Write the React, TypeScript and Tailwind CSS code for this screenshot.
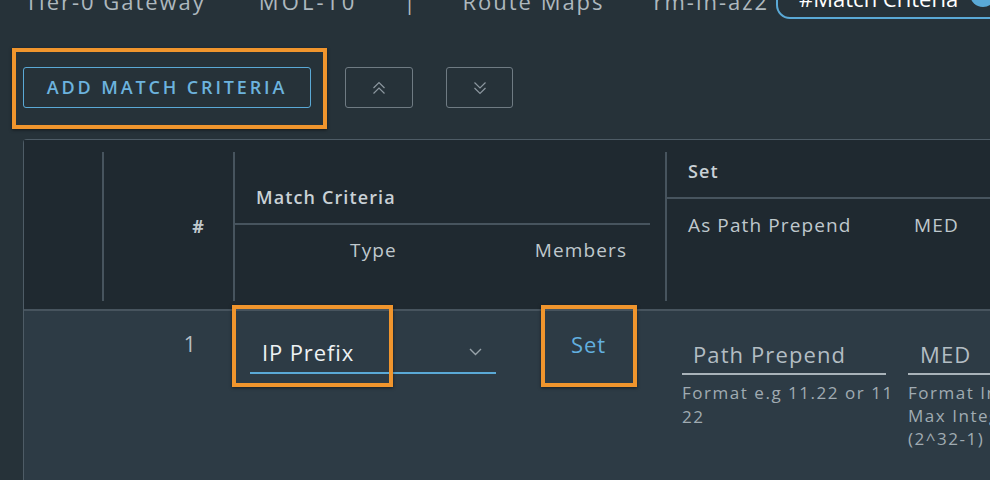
import React from "react";

function DoubleChevron({ dir }: { dir: "up" | "down" }) {
  return (
    <svg width="14" height="16" viewBox="0 0 14 16" fill="none" stroke="#8c979f" strokeWidth="1.2">
      {dir === "up" ? (
        <>
          <path d="M1.5 8 L7 2.5 L12.5 8" />
          <path d="M1.5 13.5 L7 8 L12.5 13.5" />
        </>
      ) : (
        <>
          <path d="M1.5 2.5 L7 8 L12.5 2.5" />
          <path d="M1.5 8 L7 13.5 L12.5 8" />
        </>
      )}
    </svg>
  );
}

function Highlight({ className }: { className: string }) {
  return <div className={"pointer-events-none absolute border-[4px] border-[#f0952d] shadow-[0_1px_3px_rgba(0,0,0,0.5)] " + className} />;
}

export default function App() {
  return (
    <div className="relative h-[480px] w-[990px] overflow-hidden bg-[#263239] font-['Open_Sans',sans-serif] tracking-[0.07em]">
      {/* breadcrumb / tabs, cut off at the top */}
      <nav className="-mt-[21px] flex h-[40px] items-center whitespace-nowrap text-[22px] tracking-[0.09em] text-[#aeb8be]">
        <span className="ml-[25px] shrink-0 translate-y-[2px]">Tier-0 Gateway</span>
        <span className="ml-[53px] shrink-0 translate-y-[2px] tracking-[0.14em]">MOL-T0</span>
        <span className="ml-[46px] shrink-0 translate-y-[2px]">|</span>
        <span className="ml-[45px] shrink-0 translate-y-[2px]">Route Maps</span>
        <span className="ml-[49px] shrink-0 translate-y-[2px]">rm-in-az2</span>
        <div className="ml-[7px] flex h-[40px] shrink-0 items-center rounded-[14px] border-2 border-[#5aa9d6] pl-[21px] pr-[40px]">
          <span className="-translate-y-[1px] tracking-normal text-white">#Match Criteria</span>
          <span className="ml-[12px] flex h-[26px] w-[26px] -translate-y-[5px] items-center justify-center rounded-full bg-[#5aa9d6] text-[16px] font-bold text-[#1f2a31]">i</span>
        </div>
      </nav>

      {/* toolbar */}
      <div className="ml-[23px] mt-[48px] flex items-center">
        <div className="relative shrink-0">
          <button className="flex h-[41px] w-[288px] items-center justify-center rounded-[3px] border border-[#5aa9d6] text-[18px] font-semibold tracking-[0.16em] text-[#6cb3de]">
            ADD MATCH CRITERIA
          </button>
          <Highlight className="-bottom-[21px] -left-[11px] -right-[16px] -top-[19px]" />
        </div>
        <button className="ml-[34px] flex h-[41px] w-[68px] shrink-0 items-center justify-center rounded-[3px] border border-[#6f7b83]">
          <DoubleChevron dir="up" />
        </button>
        <button className="ml-[33px] flex h-[41px] w-[67px] shrink-0 items-center justify-center rounded-[3px] border border-[#6f7b83]">
          <DoubleChevron dir="down" />
        </button>
      </div>

      {/* table */}
      <div className="ml-[23px] mt-[31px] h-[400px] rounded-tl-[4px] border-l border-t border-[#4e5c66]">
        <div className="flex h-[169px] bg-[#1f2930] pb-[8px] pt-[12px] text-[#bfc8cd]">
          <div className="w-[78px] shrink-0" />
          <div className="flex w-[131px] shrink-0 items-center justify-end border-l-2 border-[#47545e] pr-[28px] text-[18px] font-bold">#</div>
          <div className="flex w-[432px] shrink-0 flex-col border-l-2 border-[#47545e]">
            <div className="mr-[15px] h-[73px] border-b-2 border-[#47545e] pl-[21px] pt-[35px] text-[18px] font-semibold leading-[20px] text-[#c9d1d6]">
              Match Criteria
            </div>
            <div className="flex pt-[15px] text-[19px] leading-[20px]">
              <div className="w-[277px] shrink-0 text-center">Type</div>
              <div className="w-[138px] shrink-0 text-center">Members</div>
            </div>
          </div>
          <div className="flex min-w-0 flex-1 flex-col border-l-2 border-[#47545e]">
            <div className="h-[47px] border-b-2 border-[#47545e] pl-[21px] pt-[9px] text-[18px] font-semibold leading-[20px] text-[#c9d1d6]">
              Set
            </div>
            <div className="flex whitespace-nowrap pt-[16px] text-[19px] leading-[20px]">
              <div className="w-[224px] shrink-0 pl-[21px]">As Path Prepend</div>
              <div className="shrink-0 pl-[23px]">MED</div>
            </div>
          </div>
        </div>

        <div className="relative flex h-[240px] border-t-2 border-[#47545e] bg-[#2d3b45]">
          <div className="w-[78px] shrink-0" />
          <div className="w-[131px] shrink-0 pr-[36px] pt-[19px] text-right text-[21px] leading-[28px] text-[#b5bec4]">1</div>
          <div className="flex w-[432px] shrink-0 items-start">
            <div className="ml-[17px] mt-[25px] flex h-[38px] w-[246px] shrink-0 items-center justify-between border-b-2 border-[#5aa9d6] pb-[4px] pl-[12px] pr-[14px]">
              <span className="text-[22px] tracking-[0.04em] text-[#eef2f4]">IP Prefix</span>
              <svg width="13" height="8" viewBox="0 0 13 8" fill="none" stroke="#98a3aa" strokeWidth="1.4">
                <path d="M1 1 L6.5 6.5 L12 1" />
              </svg>
            </div>
            <span className="ml-[75px] mt-[19px] shrink-0 text-[22px] leading-[28px] tracking-[0.04em] text-[#62afdf]">Set</span>
          </div>
          <div className="flex min-w-0 flex-1 items-start whitespace-nowrap">
            <div className="ml-[17px] mt-[25px] w-[204px] shrink-0">
              <div className="flex h-[39px] items-center overflow-hidden border-b-2 border-[#a9b3b9] pl-[11px] text-[22px] tracking-[0.05em] text-[#b3bdc3]">
                Path Prepend
              </div>
              <p className="mt-[6px] text-[17px] leading-[24px] tracking-[0.09em] text-[#a0abb2]">
                Format e.g 11.22 or 11
                <br />
                22
              </p>
            </div>
            <div className="ml-[22px] mt-[25px] w-[160px] shrink-0">
              <div className="flex h-[39px] items-center border-b-2 border-[#a9b3b9] pl-[12px] text-[22px] tracking-[0.05em] text-[#b3bdc3]">
                MED
              </div>
              <p className="mt-[6px] text-[17px] leading-[23px] tracking-[0.09em] text-[#a0abb2]">
                Format Integer
                <br />
                Max Integer
                <br />
                (2^32-1)
              </p>
            </div>
          </div>
          <Highlight className="-top-[6px] left-[208px] h-[82px] w-[161px]" />
          <Highlight className="-top-[6px] left-[517px] h-[82px] w-[96px]" />
        </div>
      </div>
    </div>
  );
}
